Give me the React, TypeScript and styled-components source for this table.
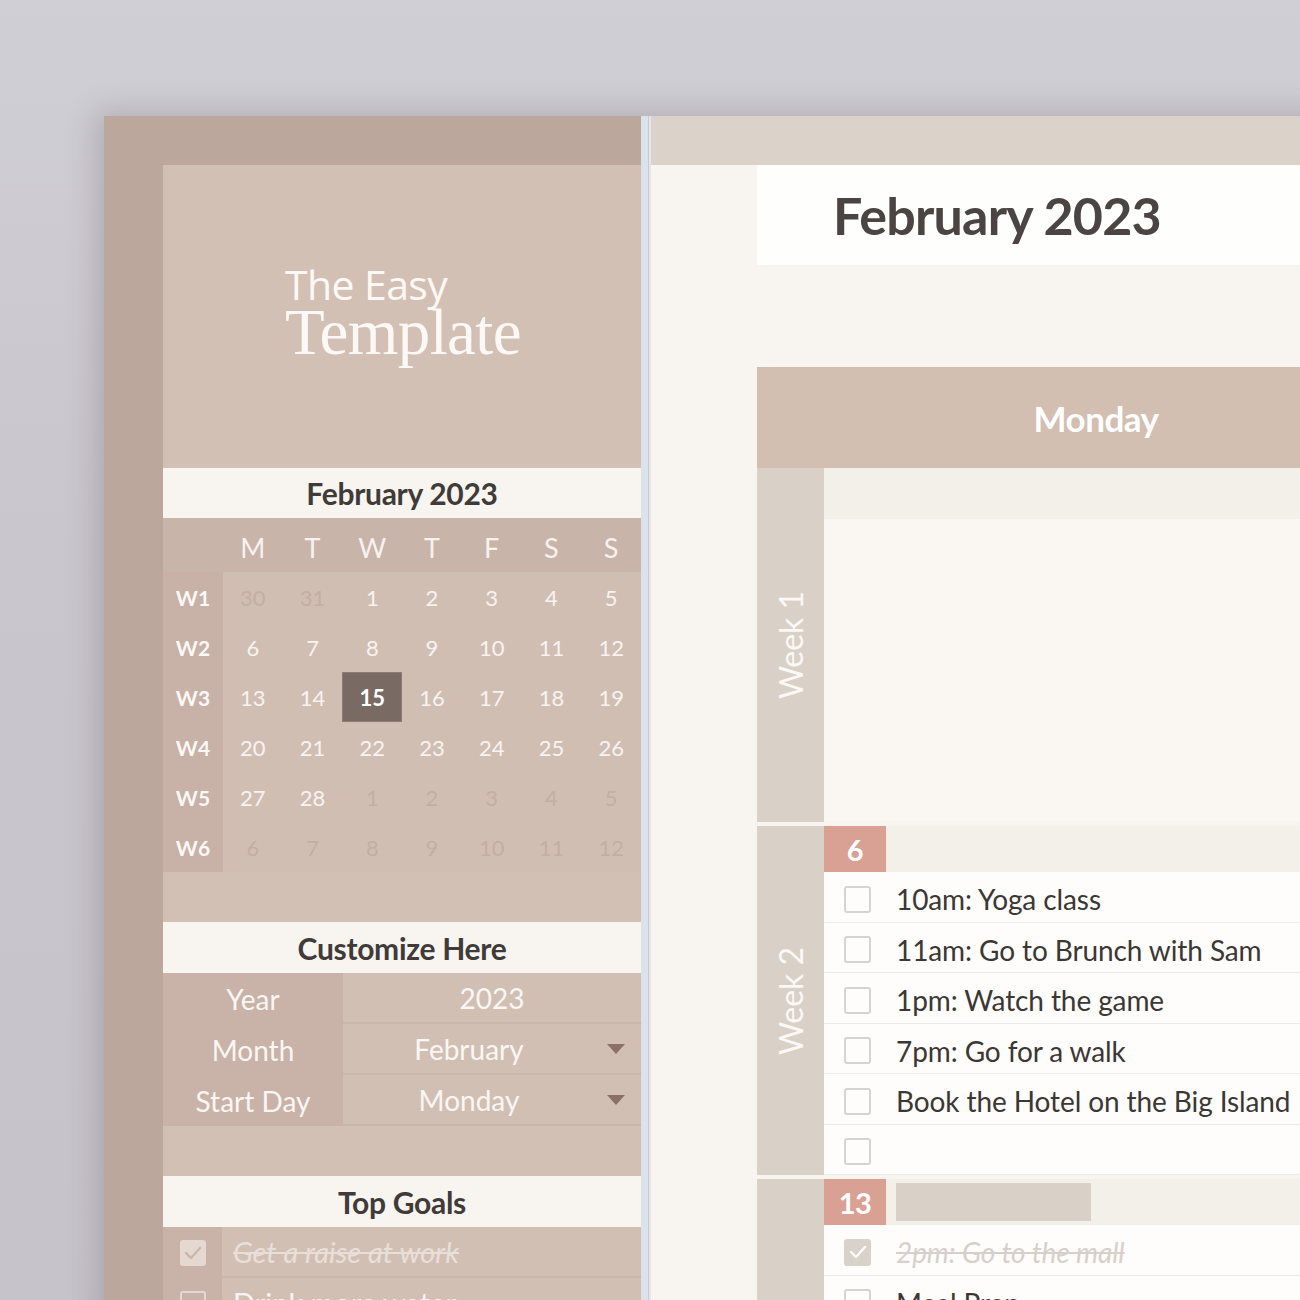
import React from "react";
import styled, { createGlobalStyle } from "styled-components";

const GlobalStyle = createGlobalStyle`
  html, body { margin: 0; padding: 0; }
  body {
    width: 1300px;
    height: 1300px;
    overflow: hidden;
    font-family: Lato, "Open Sans", "Noto Sans", sans-serif;
  }
`;

const Desk = styled.div`
  width: 1300px;
  height: 1300px;
  box-sizing: border-box;
  overflow: hidden;
  padding: 116px 0 0 104px;
  background: linear-gradient(180deg, #d0cfd5 0%, #c9c7cd 40%, #c6c4ca 100%);
`;

const Sheet = styled.div`
  display: flex;
  align-items: stretch;
  width: 1400px;
  min-height: 1300px;
  box-shadow: -8px -4px 28px rgba(70, 60, 70, 0.22);
`;

/* ---------- sidebar ---------- */
const Sidebar = styled.aside`
  flex: none;
  width: 537px;
  box-sizing: border-box;
  padding: 49px 0 0 59px;
  background: #bba79c;
`;

const SideInner = styled.div`
  display: flex;
  flex-direction: column;
  width: 478px;
  background: #d2bfb4;
  & > * { flex: none; }
`;

const LogoBlock = styled.div`
  height: 303px;
  display: flex;
  align-items: center;
  justify-content: center;
  background: #d3c0b5;
`;

const Logo = styled.div`
  display: flex;
  flex-direction: column;
  color: #fbf8f5;
  margin-left: 2px;
  margin-top: -10px;
`;

const LogoSmall = styled.span`
  font-family: "Open Sans", sans-serif;
  font-size: 41px;
  line-height: 40px;
  letter-spacing: -0.6px;
`;

const LogoBig = styled.span`
  font-family: "Liberation Serif", serif;
  font-size: 65px;
  line-height: 56px;
  letter-spacing: -0.6px;
`;

const SectionTitle = styled.div<{ $h?: number }>`
  height: ${(p) => p.$h ?? 51}px;
  display: flex;
  align-items: center;
  justify-content: center;
  background: #f8f5f1;
  color: #403b39;
  font-weight: 700;
  font-size: 30px;
  letter-spacing: -0.3px;
`;

const CalRow = styled.div<{ $h: number; $tone?: string }>`
  display: grid;
  grid-template-columns: 60px repeat(7, 1fr);
  height: ${(p) => p.$h}px;
  background: ${(p) => p.$tone ?? "#d1beb3"};
`;

const DayLetter = styled.div`
  display: flex;
  align-items: center;
  justify-content: center;
  color: #f7f2ef;
  font-size: 27px;
  padding-top: 4px;
`;

const WeekTag = styled.div`
  display: flex;
  align-items: center;
  justify-content: center;
  background: #c8b1a6;
  color: #fbf8f6;
  font-weight: 700;
  font-size: 21px;
`;

const DayNum = styled.div<{ $faded?: boolean; $today?: boolean }>`
  display: flex;
  align-items: center;
  justify-content: center;
  font-size: 22px;
  color: ${(p) => (p.$today ? "#ffffff" : p.$faded ? "#c2aea4" : "#f8f3f0")};
  background: ${(p) => (p.$today ? "#7a6a64" : "transparent")};
  box-shadow: ${(p) => (p.$today ? "inset 0 0 0 1px #8c7c76" : "none")};
  font-weight: ${(p) => (p.$today ? 700 : 400)};
`;

const Spacer = styled.div<{ $h: number }>`
  height: ${(p) => p.$h}px;
  background: #d3c0b5;
`;

const SettingRow = styled.div`
  display: grid;
  grid-template-columns: 180px 1fr;
  height: 51px;
`;

const SettingLabel = styled.div`
  display: flex;
  align-items: center;
  justify-content: center;
  background: #c9b2a7;
  color: #faf6f3;
  font-size: 28px;
`;

const SettingValue = styled.div<{ $select?: boolean }>`
  position: relative;
  display: flex;
  align-items: center;
  justify-content: center;
  box-sizing: border-box;
  padding-right: ${(p) => (p.$select ? 46 : 0)}px;
  background: #d2bfb4;
  border-bottom: 2px solid #c9b7ac;
  color: #faf6f3;
  font-size: 28px;
`;

const Caret = styled.span`
  position: absolute;
  right: 16px;
  top: 20px;
  width: 0;
  height: 0;
  border-left: 9px solid transparent;
  border-right: 9px solid transparent;
  border-top: 10px solid #8a7067;
`;

const GoalRow = styled.div`
  display: grid;
  grid-template-columns: 59px 1fr;
  height: 51px;
`;

const GoalCheckCell = styled.div`
  display: flex;
  align-items: center;
  justify-content: center;
  background: #c9b2a7;
`;

const GoalText = styled.div<{ $done?: boolean }>`
  display: flex;
  align-items: center;
  box-sizing: border-box;
  padding-left: 11px;
  background: #d2bfb4;
  border-bottom: 2px solid #c9b7ac;
  font-size: 29px;
  white-space: nowrap;
  color: ${(p) => (p.$done ? "#e9dfd9" : "#f9f4f1")};
  font-style: ${(p) => (p.$done ? "italic" : "normal")};
  text-decoration: ${(p) => (p.$done ? "line-through" : "none")};
`;

const Box = styled.span<{ $size: number; $checked?: boolean; $fill: string; $line: string }>`
  flex: none;
  display: inline-flex;
  align-items: center;
  justify-content: center;
  box-sizing: border-box;
  width: ${(p) => p.$size}px;
  height: ${(p) => p.$size}px;
  border-radius: 3px;
  background: ${(p) => (p.$checked ? p.$fill : "transparent")};
  border: 2px solid ${(p) => p.$line};
`;

/* ---------- divider ---------- */
const Divider = styled.div`
  flex: none;
  width: 10px;
  background: linear-gradient(90deg, #dce2ec 0, #dde3ed 7px, #c7cad3 7px, #c7cad3 8px, #e4e6ec 8px);
`;

/* ---------- main ---------- */
const Main = styled.main`
  flex: none;
  width: 800px;
  display: flex;
  flex-direction: column;
  background: #f8f5f1;
  & > * { flex: none; }
`;

const TopBand = styled.div`
  height: 49px;
  background: #dbd3c9;
`;

const MainBody = styled.div`
  display: flex;
  flex-direction: column;
  padding-left: 106px;
  & > * { flex: none; }
`;

const TitleBox = styled.h1`
  margin: 0;
  height: 100px;
  display: flex;
  align-items: center;
  padding-left: 76px;
  background: #fefefd;
  color: #4a4542;
  font-size: 52px;
  font-weight: 700;
  letter-spacing: -0.8px;
`;

const DayColumn = styled.section`
  width: 678px;
  margin-top: 102px;
  display: flex;
  flex-direction: column;
  & > * { flex: none; }
`;

const DayHeader = styled.div`
  height: 101px;
  display: flex;
  align-items: center;
  justify-content: center;
  background: #d3beb2;
  color: #ffffff;
  font-size: 35px;
  font-weight: 700;
  letter-spacing: -0.5px;
`;

const WeekBlock = styled.div<{ $gap?: number }>`
  display: grid;
  grid-template-columns: 67px 1fr;
  margin-top: ${(p) => p.$gap ?? 0}px;
`;

const WeekLabel = styled.div`
  display: flex;
  align-items: center;
  justify-content: center;
  background: #d9d1c7;
  color: #fbf8f5;
  font-size: 32px;
  writing-mode: vertical-rl;
  transform: rotate(180deg);
`;

const WeekContent = styled.div`
  display: flex;
  flex-direction: column;
  & > * { flex: none; }
`;

const DateRow = styled.div<{ $h: number }>`
  height: ${(p) => p.$h}px;
  display: flex;
  align-items: center;
  background: #f3efe9;
`;

const DateBadge = styled.div`
  width: 62px;
  height: 100%;
  display: flex;
  align-items: center;
  justify-content: center;
  background: #d9a194;
  color: #ffffff;
  font-size: 29px;
  font-weight: 700;
  letter-spacing: -0.5px;
`;

const NoteBar = styled.div`
  margin-left: 10px;
  width: 195px;
  height: 38px;
  background: #d9d1c7;
`;

const EmptyDay = styled.div`
  height: 303px;
  background: #faf7f3;
`;

const TaskRow = styled.div`
  height: 50.5px;
  box-sizing: border-box;
  display: flex;
  align-items: center;
  gap: 25px;
  padding: 5px 0 0 20px;
  background: #fefdfc;
  border-bottom: 1px solid #eeeae6;
`;

const TaskText = styled.span<{ $done?: boolean }>`
  font-size: 28px;
  white-space: nowrap;
  letter-spacing: -0.1px;
  color: ${(p) => (p.$done ? "#d6d0cb" : "#3b3735")};
  font-style: ${(p) => (p.$done ? "italic" : "normal")};
  text-decoration: ${(p) => (p.$done ? "line-through" : "none")};
`;

const Check = ({ color }: { color: string }) => (
  <svg width="18" height="14" viewBox="0 0 18 14" fill="none">
    <polyline points="2,7 7,12 16,2" stroke={color} strokeWidth="2.4" strokeLinecap="round" strokeLinejoin="round" />
  </svg>
);

const weeks: { label: string; days: { n: number; f?: boolean; t?: boolean }[] }[] = [
  { label: "W1", days: [{ n: 30, f: true }, { n: 31, f: true }, { n: 1 }, { n: 2 }, { n: 3 }, { n: 4 }, { n: 5 }] },
  { label: "W2", days: [6, 7, 8, 9, 10, 11, 12].map((n) => ({ n })) },
  { label: "W3", days: [13, 14, 15, 16, 17, 18, 19].map((n) => ({ n, t: n === 15 })) },
  { label: "W4", days: [20, 21, 22, 23, 24, 25, 26].map((n) => ({ n })) },
  { label: "W5", days: [{ n: 27 }, { n: 28 }, { n: 1, f: true }, { n: 2, f: true }, { n: 3, f: true }, { n: 4, f: true }, { n: 5, f: true }] },
  { label: "W6", days: [6, 7, 8, 9, 10, 11, 12].map((n) => ({ n, f: true })) },
];

const letters = ["M", "T", "W", "T", "F", "S", "S"];

const week2Tasks = [
  "10am: Yoga class",
  "11am: Go to Brunch with Sam",
  "1pm: Watch the game",
  "7pm: Go for a walk",
  "Book the Hotel on the Big Island",
  "",
];

const week3Tasks = ["Meal Prep", "", "", "", ""];

export default function App() {
  return (
    <>
      <GlobalStyle />
      <Desk>
        <Sheet>
          <Sidebar>
            <SideInner>
              <LogoBlock>
                <Logo>
                  <LogoSmall>The Easy</LogoSmall>
                  <LogoBig>Template</LogoBig>
                </Logo>
              </LogoBlock>
              <SectionTitle $h={50}>February 2023</SectionTitle>
              <CalRow $h={54} $tone="#c9b4a9">
                <div />
                {letters.map((l, i) => (
                  <DayLetter key={i}>{l}</DayLetter>
                ))}
              </CalRow>
              {weeks.map((w) => (
                <CalRow key={w.label} $h={50}>
                  <WeekTag>{w.label}</WeekTag>
                  {w.days.map((d, i) => (
                    <DayNum key={i} $faded={d.f} $today={d.t}>
                      {d.n}
                    </DayNum>
                  ))}
                </CalRow>
              ))}
              <Spacer $h={50} />
              <SectionTitle>Customize Here</SectionTitle>
              <SettingRow>
                <SettingLabel>Year</SettingLabel>
                <SettingValue>2023</SettingValue>
              </SettingRow>
              <SettingRow>
                <SettingLabel>Month</SettingLabel>
                <SettingValue $select>
                  February
                  <Caret />
                </SettingValue>
              </SettingRow>
              <SettingRow>
                <SettingLabel>Start Day</SettingLabel>
                <SettingValue $select>
                  Monday
                  <Caret />
                </SettingValue>
              </SettingRow>
              <Spacer $h={50} />
              <SectionTitle>Top Goals</SectionTitle>
              <GoalRow>
                <GoalCheckCell>
                  <Box $size={26} $checked $fill="#e5d8d1" $line="#e5d8d1">
                    <Check color="#ccb6ac" />
                  </Box>
                </GoalCheckCell>
                <GoalText $done>Get a raise at work</GoalText>
              </GoalRow>
              <GoalRow>
                <GoalCheckCell>
                  <Box $size={26} $fill="transparent" $line="#e5d8d1" />
                </GoalCheckCell>
                <GoalText>Drink more water</GoalText>
              </GoalRow>
            </SideInner>
          </Sidebar>
          <Divider />
          <Main>
            <TopBand />
            <MainBody>
              <TitleBox>February 2023</TitleBox>
              <DayColumn>
                <DayHeader>Monday</DayHeader>
                <WeekBlock>
                  <WeekLabel>Week 1</WeekLabel>
                  <WeekContent>
                    <DateRow $h={51} />
                    <EmptyDay />
                  </WeekContent>
                </WeekBlock>
                <WeekBlock $gap={4}>
                  <WeekLabel>Week 2</WeekLabel>
                  <WeekContent>
                    <DateRow $h={46}>
                      <DateBadge>6</DateBadge>
                    </DateRow>
                    {week2Tasks.map((t, i) => (
                      <TaskRow key={i}>
                        <Box $size={27} $fill="transparent" $line="#d8d3cf" />
                        <TaskText>{t}</TaskText>
                      </TaskRow>
                    ))}
                  </WeekContent>
                </WeekBlock>
                <WeekBlock $gap={4}>
                  <WeekLabel>Week 3</WeekLabel>
                  <WeekContent>
                    <DateRow $h={46}>
                      <DateBadge>13</DateBadge>
                      <NoteBar />
                    </DateRow>
                    <TaskRow>
                      <Box $size={27} $checked $fill="#d9d2cb" $line="#d9d2cb">
                        <Check color="#ffffff" />
                      </Box>
                      <TaskText $done>2pm: Go to the mall</TaskText>
                    </TaskRow>
                    {week3Tasks.map((t, i) => (
                      <TaskRow key={i}>
                        <Box $size={27} $fill="transparent" $line="#d8d3cf" />
                        <TaskText>{t}</TaskText>
                      </TaskRow>
                    ))}
                  </WeekContent>
                </WeekBlock>
              </DayColumn>
            </MainBody>
          </Main>
        </Sheet>
      </Desk>
    </>
  );
}
